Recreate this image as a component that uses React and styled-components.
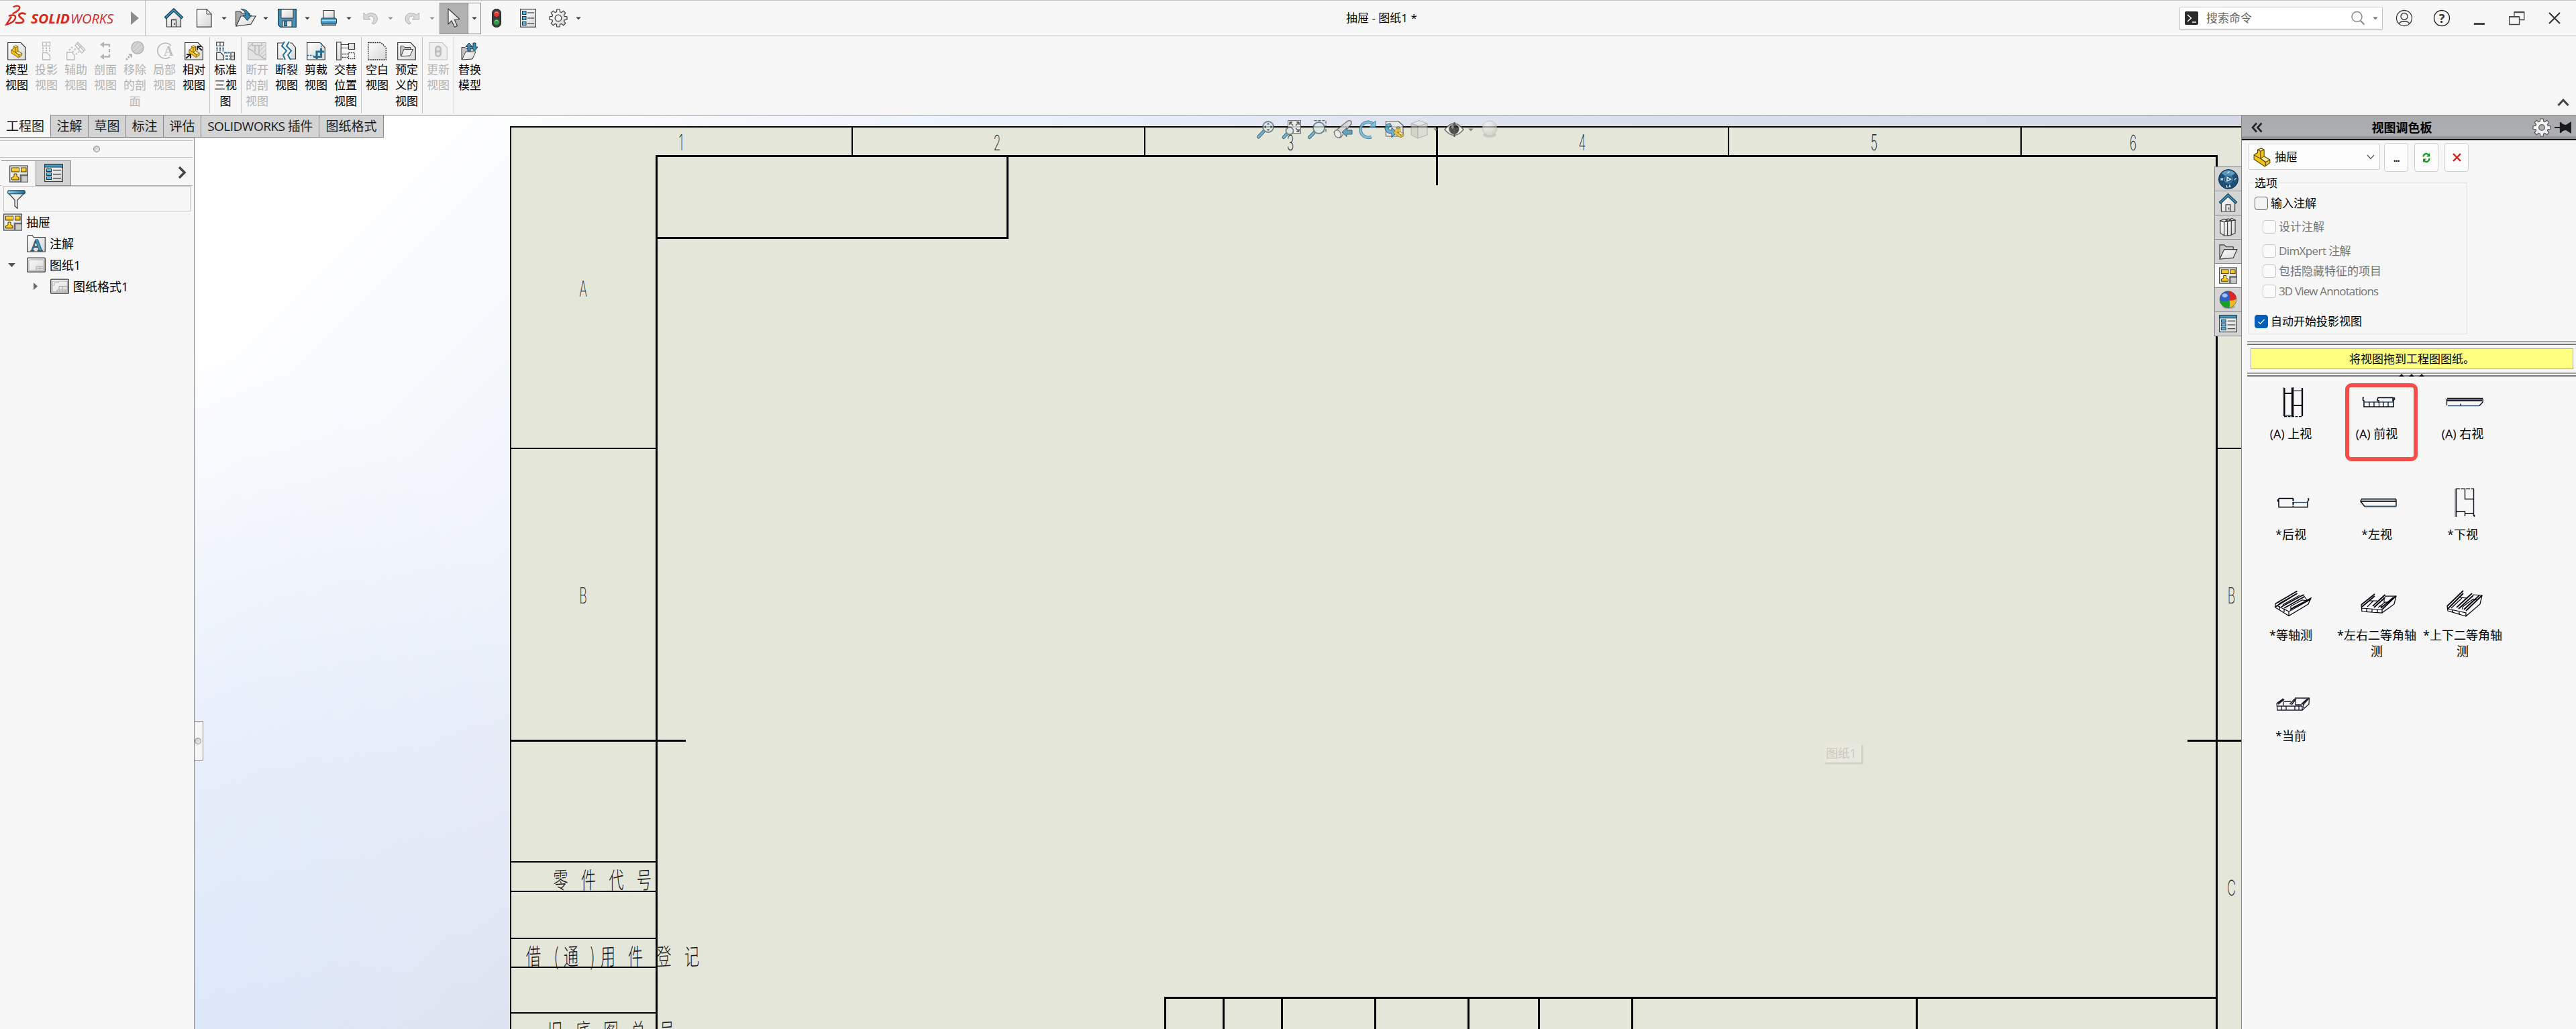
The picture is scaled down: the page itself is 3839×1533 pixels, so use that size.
import React from "react";
import styled, { createGlobalStyle, css } from "styled-components";

const UI = `"Open Sans", "Noto Sans", "Noto Sans CJK SC", sans-serif`;

const GlobalStyle = createGlobalStyle`
  *, *::before, *::after { box-sizing: border-box; }
  body { margin: 0; background: #f7f7f7; font-family: ${UI}; font-weight: 400; color: #000; }
`;

/* ---------- frame ---------- */
const Window = styled.div`
  width: 3839px;
  height: 1533px;
  overflow: hidden;
  display: flex;
  flex-direction: column;
  background: #f7f7f7;
`;
const TitleBar = styled.header`
  flex: none;
  height: 54px;
  display: flex;
  align-items: center;
  border-top: 1px solid #c0c0c0;
  border-bottom: 1px solid #c0c0c0;
`;
const Brand = styled.div`
  width: 217px;
  height: 52px;
  display: flex;
  align-items: center;
  border-right: 1px solid #c0c0c0;
`;
const QuickBar = styled.div`
  width: 1789px;
  display: flex;
  align-items: center;
`;
const Tool = styled.span`
  display: flex;
  flex: none;
  width: 28px;
  height: 28px;
  margin-left: ${(p) => p.$ml || 0}px;
  opacity: ${(p) => (p.$off ? 0.8 : 1)};
`;
const SelectTool = styled.div`
  display: flex;
  margin-left: 7px;
  width: 62px;
  height: 47px;
  border: 1px solid #8a8a8a;
`;
const SelectMain = styled.div`
  width: 42px;
  display: flex;
  align-items: center;
  justify-content: center;
  background: #b2b2b2;
  border-right: 1px solid #777;
`;
const SelectDrop = styled.div`
  flex: 1;
  display: flex;
  align-items: center;
  justify-content: center;
`;
const DocTitle = styled.div`
  font-size: 17px;
  line-height: 24px;
  white-space: pre;
`;
const WindowTools = styled.div`
  margin-left: auto;
  padding-right: 20px;
  display: flex;
  align-items: center;
`;
const SearchBox = styled.div`
  width: 303px;
  height: 35px;
  padding: 0 6px 0 7px;
  display: flex;
  align-items: center;
  background: #fff;
  border: 1px solid #c4c4c4;
  border-bottom-color: #9a9a9a;
  border-radius: 2px;
  color: #666;
  font-size: 17px;
`;
const SearchText = styled.span`
  flex: 1;
  margin-left: 12px;
  line-height: 24px;
`;
const SearchLens = styled.span`
  display: flex;
  margin-right: 12px;
`;
const SysButton = styled.span`
  display: flex;
  width: 24px;
  height: 28px;
  margin-left: ${(p) => p.$ml || 32}px;
`;

/* ---------- ribbon ---------- */
const Ribbon = styled.div`
  flex: none;
  height: 118px;
  padding: 1px 10px 0 3px;
  display: flex;
  border-bottom: 1px solid #888;
`;
const RibbonItem = styled.div`
  width: 44px;
  padding-top: 7px;
  display: flex;
  flex-direction: column;
  align-items: center;
  color: ${(p) => (p.$off ? "#b4b4b4" : "#000")};
`;
const RibbonLabel = styled.div`
  margin-top: 2px;
  font-size: 17px;
  line-height: 23.3px;
  text-align: center;
  white-space: pre;
`;
const RibbonSep = styled.div`
  width: 1px;
  height: 114px;
  margin: 0 1px;
  background: #c3c3c3;
`;
const RibbonFold = styled.div`
  margin: 90px 0 0 auto;
  display: flex;
  height: 14px;
`;

/* ---------- body ---------- */
const Body = styled.div`
  flex: 1;
  display: flex;
  min-height: 0;
`;
const LeftPanel = styled.aside`
  flex: none;
  width: 290px;
  display: flex;
  flex-direction: column;
  align-items: flex-start;
`;
const TabStrip = styled.nav`
  position: relative;
  z-index: 3;
  display: flex;
  width: max-content;
  height: 33px;
`;
const Tab = styled.div`
  width: ${(p) => p.$w}px;
  height: ${(p) => (p.$active ? 34 : 33)}px;
  margin-top: ${(p) => (p.$active ? -1 : 0)}px;
  padding-top: ${(p) => (p.$active ? 1 : 0)}px;
  display: flex;
  align-items: center;
  justify-content: center;
  background: ${(p) => (p.$active ? "#f7f7f7" : "#d4d4d4")};
  border-right: 1px solid #888;
  border-bottom: 1px solid #888;
  font-size: 19px;
  line-height: 26px;
  letter-spacing: ${(p) => p.$ls || 0}px;
  white-space: pre;
  color: #1a1a1a;
`;
const TreePane = styled.div`
  width: 290px;
  flex: 1;
  border-right: 1px solid #888;
  border-top: 1px solid #c9d3dc;
`;
const Grip = styled.div`
  width: 287px;
  height: 26px;
  margin-top: 3px;
  display: flex;
  align-items: center;
  justify-content: center;
  border-top: 1px solid #c3c3c3;
  border-bottom: 1px solid #c3c3c3;
`;
const GripDot = styled.span`
  width: 10px;
  height: 10px;
  border-radius: 50%;
  border: 1px solid #8c8c8c;
  background: linear-gradient(135deg, #c2c2c2, #f2f2f2);
`;
const PaneTabs = styled.div`
  width: 287px;
  height: 42px;
  padding: 4px 0 0 2px;
  display: flex;
  border-bottom: 1px solid #a8a8a8;
`;
const PaneTab = styled.div`
  width: ${(p) => (p.$on ? 51 : 53)}px;
  height: 38px;
  display: flex;
  align-items: center;
  justify-content: center;
  border-top: 1px solid #888;
  ${(p) =>
    p.$on
      ? css`background: #f7f7f7;`
      : css`
          background: #d4d4d4;
          border: 1px solid #888;
        `}
`;
const PaneMore = styled.div`
  margin: 8px 9px 0 auto;
`;
const FilterBox = styled.div`
  width: 279px;
  height: 38px;
  margin-left: 5px;
  padding: 5px 0 0 5px;
  border: 1px solid #c6c6c6;
`;
const TreeRow = styled.div`
  height: 32px;
  padding-left: ${(p) => p.$pad}px;
  display: flex;
  align-items: center;
  font-size: 18px;
  line-height: 26px;
  white-space: pre;
`;
const TreeToggle = styled.span`
  width: 12px;
  height: 12px;
  display: flex;
  margin-right: ${(p) => p.$mr}px;
`;
const TreeIcon = styled.span`
  width: 28px;
  height: 28px;
  display: flex;
  margin-right: 6px;
`;

/* ---------- viewport ---------- */
const Viewport = styled.main`
  position: relative;
  flex: 1;
  min-width: 0;
  overflow: hidden;
  background:
    radial-gradient(ellipse 620px 1000px at 0 100%, rgba(208, 224, 249, 0.5), rgba(215, 228, 250, 0) 100%),
    linear-gradient(135deg, #ffffff 7%, #f3f6fc 21%, #ecf1fa 28%, #e5e9f4 36%, #dfe3ee 42%, #d4d9e5 70%);
`;
const SheetSvg = styled.svg`
  display: block;
  width: 3050px;
  height: 1361px;
`;
const Hud = styled.div`
  position: absolute;
  left: 1583px;
  top: 7px;
  display: flex;
  gap: 10px;
  align-items: center;
  opacity: 0.8;
`;
const HudCaret = styled.span`
  display: flex;
  margin: 0 ${(p) => p.$mr}px 0 -3px;
`;
const SplitHandle = styled.div`
  position: absolute;
  left: -1px;
  top: 902px;
  width: 14px;
  height: 59px;
  padding-left: 1px;
  display: flex;
  align-items: center;
  background: #f7f7f7;
  border: 1px solid #888;
  border-left: 0;
`;
const SheetTip = styled.div`
  position: absolute;
  left: 2428px;
  top: 936px;
  width: 56px;
  height: 28px;
  padding-left: 3px;
  font-size: 18px;
  line-height: 28px;
  letter-spacing: -0.3px;
  white-space: nowrap;
  color: #c9c9c0;
  background: #e8e8df;
  box-shadow: 2px 2px 2px rgba(0, 0, 0, 0.13);
`;
const TaskTabs = styled.div`
  position: absolute;
  right: 0;
  top: 76px;
  width: 40px;
  display: flex;
  flex-direction: column;
  border-top: 1px solid #888;
`;
const TaskTab = styled.div`
  height: 36px;
  display: flex;
  align-items: center;
  justify-content: center;
  background: ${(p) => (p.$on ? "#f7f7f7" : "#d4d4d4")};
  border-left: 1px solid #888;
  border-bottom: 1px solid #888;
`;

/* ---------- view palette ---------- */
const Palette = styled.aside`
  flex: none;
  width: 499px;
  border-left: 1px solid #888;
  background: #f7f7f7;
`;
const PaletteHead = styled.div`
  height: 37px;
  padding: 0 6px 0 14px;
  display: flex;
  align-items: center;
  background: linear-gradient(#a9aaad, #aeafb2 85%, #8f9093 93%);
  border-bottom: 2px solid #111;
`;
const PaletteTitle = styled.div`
  width: 396px;
  margin-left: 12px;
  text-align: center;
  font-size: 18px;
  font-weight: 700;
  line-height: 26px;
`;
const PinSlot = styled.span`
  display: flex;
  margin-left: 5px;
`;
const SourceRow = styled.div`
  display: flex;
  padding: 4px 0 0 10px;
  height: 47px;
`;
const Combo = styled.div`
  width: 196px;
  height: 39px;
  margin: 1px 6px 0 0;
  padding: 0 7px 0 5px;
  display: flex;
  align-items: center;
  background: #fdfdfd;
  border: 1px solid #ccc;
  border-radius: 2px;
  font-size: 17px;
  line-height: 24px;
`;
const ComboText = styled.span`
  flex: 1;
  margin-left: 5px;
`;
const SquareButton = styled.div`
  width: 36px;
  height: 43px;
  margin-right: 9px;
  display: flex;
  align-items: center;
  justify-content: center;
  background: #fdfdfd;
  border: 1px solid #cfcfcf;
  border-radius: 4px;
  font-size: 16px;
  font-weight: 600;
  letter-spacing: -1.4px;
`;
const Options = styled.section`
  width: 326px;
  height: 226px;
  margin: 16px 0 0 10px;
  border: 1px solid #dcdcdc;
`;
const Legend = styled.div`
  width: max-content;
  margin: -12px 0 0 6px;
  padding: 0 2px;
  background: #f7f7f7;
  font-size: 17px;
  line-height: 24px;
`;
const CheckRow = styled.label`
  height: 20px;
  margin-top: ${(p) => p.$mt}px;
  margin-left: ${(p) => (p.$sub ? 20 : 8)}px;
  display: flex;
  align-items: center;
  gap: 4px;
  font-size: 17px;
  line-height: 24px;
  letter-spacing: ${(p) => p.$ls || 0}px;
  white-space: pre;
  color: ${(p) => (p.$sub ? "#747474" : "#000")};
`;
const Box = styled.span`
  width: 20px;
  height: 20px;
  display: flex;
  border-radius: 4px;
  border: 1px solid ${(p) => (p.$on ? "#005fb8" : p.$sub ? "#c6c6c6" : "#666")};
  background: ${(p) => (p.$on ? "#005fb8" : p.$sub ? "#fbfbfb" : "#f3f3f3")};
`;
const Splitter = styled.div`
  height: 6px;
  margin: ${(p) => p.$mt}px 0 0 8px;
  display: flex;
  justify-content: center;
  border-top: 2px solid #a0a0a0;
  border-bottom: 2px solid #777;
`;
const Hint = styled.div`
  height: 31px;
  margin: 5px 4px 0 13px;
  border: 1px solid #a9a9a0;
  background: #ffff80;
  text-align: center;
  font-size: 17px;
  line-height: 29px;
`;
const Views = styled.div`
  display: grid;
  grid-template-columns: repeat(3, 128px);
  grid-auto-rows: 150px;
  margin: 8px 0 0 9px;
`;
const ViewItem = styled.div`
  position: relative;
  padding-top: 6px;
  display: flex;
  flex-direction: column;
  align-items: center;
`;
const ThumbSvg = styled.svg`
  display: block;
  width: 56px;
  height: 48px;
  margin-left: 5px;
`;
const ViewLabel = styled.div`
  margin-top: 12px;
  width: 128px;
  text-align: center;
  font-size: 18px;
  line-height: 23.5px;
`;
const Highlight = styled.span`
  position: absolute;
  left: 17px;
  top: 2px;
  width: 108px;
  height: 116px;
  border: 6px solid #f84c47;
  border-radius: 9px;
`;
const Glyph = styled.svg`
  display: block;
  flex: none;
  overflow: visible;
`;

/* ---------- icons ---------- */
const K = "#3a3a3a";
const B = "#1f6f98";

const Part = ({ t }) => (
  <g transform={t} stroke="#5e4300" strokeWidth="1" strokeLinejoin="round">
    <path d="M1 9 L6 6 L6 2 L11 0 L15 2 L15 11 L23 16 L23 20 L16 25 L1 15Z" fill="#f3c21c" />
    <path d="M6 2 L11 0 L15 2 L10 4Z M15 11 L23 16 L17 19 L10 14Z" fill="#fff0a0" />
    <path d="M10 4 V14 L17 19 V24 M1 9 L6 12 L10 14" fill="none" />
  </g>
);
const DrawingIcon = () => (
  <>
    <rect x=".7" y="2" width="26.6" height="24" fill="url(#gPaper)" stroke={K} strokeWidth="1.2" />
    <g fill="url(#gYellow)" stroke="#4a3600" strokeWidth="1">
      <rect x="3.5" y="5" width="11" height="6" />
      <rect x="17.5" y="5" width="7.5" height="6" />
      <path d="M7 14 H11 V18 L14 19.5 V23 H3.5 V19.5 L7 18Z" />
    </g>
    <rect x="17" y="15.5" width="10" height="10" fill="#ccc" />
    <path d="M17 26 V16 H27" stroke="#6a6a6a" strokeWidth="2.5" fill="none" />
  </>
);
const ListIcon = () => (
  <>
    <rect x=".7" y="1" width="26.6" height="25.5" fill="url(#gPaper)" stroke={K} strokeWidth="1.2" />
    <rect x=".7" y="1" width="26.6" height="4" fill="#4a9cc2" stroke="#12384d" />
    {[7.5, 13.5, 19.5].map((y) => (
      <g key={y}>
        <rect x="3.5" y={y} width="7" height="4" fill="#5cb4dc" stroke="#12384d" />
        <path d={`M13 ${y + 2} H25`} stroke={K} strokeWidth="1.2" />
      </g>
    ))}
  </>
);
const Mag = ({ cx = 17, cy = 10, r = 8, tail = "M10 17 L2.5 25" }) => (
  <>
    <path d={tail} stroke="#1d4f6b" strokeWidth="5" strokeLinecap="round" />
    <path d={tail} stroke="#5aa7cb" strokeWidth="3" strokeLinecap="round" />
    <circle cx={cx} cy={cy} r={r} fill="rgba(222,236,240,.85)" stroke="#5b6b73" strokeWidth="1.8" />
  </>
);
const Home = () => (
  <>
    <path d="M3.5 14 V27 H24.5 V14 L14 4Z" fill="url(#gPaper)" stroke={K} strokeWidth="1.2" />
    <path d="M1 14 L14 1.5 L27 14" fill="none" stroke="#123f57" strokeWidth="4" />
    <path d="M1.8 13.4 L14 1.9 L26.2 13.4" fill="none" stroke="#3e93bb" strokeWidth="2" />
    <path d="M10.5 27 V16.5 H17.5 V27 M15.2 21 v3" fill="none" stroke={K} strokeWidth="1.3" />
  </>
);
const Folder = () => (
  <>
    <path d="M1 25 V4 H8 L11 7 H22 V11" fill="#c9c9c9" stroke={K} strokeWidth="1.2" />
    <path d="M1 26 L8 11 H28 L22 24Z" fill="url(#gPaper)" stroke={K} strokeWidth="1.2" strokeLinejoin="round" />
  </>
);
const gearPath = (() => {
  const pts = [];
  for (let i = 0; i < 8; i++) {
    const a = (i * Math.PI) / 4;
    [[-0.27, 9.6], [-0.17, 13.2], [0.17, 13.2], [0.27, 9.6]].forEach(([d, r]) =>
      pts.push(`${(14 + r * Math.sin(a + d)).toFixed(2)} ${(14 - r * Math.cos(a + d)).toFixed(2)}`)
    );
  }
  return `M${pts.join(" L")}Z`;
})();
const curl = "M4 6 V16 H14 L10.5 12.5 C15 9 20 12 19 17 C18.6 19 17.5 20.5 16 21.5 L19.5 23 C27 18 25.5 8 17 6.5 C13 6 10 7.5 7.5 9.5Z";

const ICONS = {
  home: <Home />,
  file: (
    <>
      <path d="M3.5 .8 H18 L25 8 V27.2 H3.5Z" fill="url(#gPaper)" stroke={K} strokeWidth="1.2" />
      <path d="M18 .8 V8 H25Z" fill="#fff" stroke={K} strokeWidth="1" />
    </>
  ),
  open: (
    <>
      <path d="M-.5 25 V4 H6 L9 7 H20 V11" fill="#a8a8a8" stroke={K} strokeWidth="1.2" />
      <path d="M0 26 L7 11 H29 L22 23Z" fill="url(#gPaper)" stroke={K} strokeWidth="1.2" />
      <path d="M7 .5 C14 .5 19 4 19 10 H23 L16.5 17.5 L10 10 H14 C14 6 12 2.5 7 .5Z" fill="#3d88b0" stroke="#123f57" />
    </>
  ),
  save: (
    <>
      <path d="M.7 .7 H27.3 V27.3 H4 L.7 24Z" fill="#4a93b8" stroke="#123f57" strokeWidth="1.3" />
      <path d="M5 1 H23 V14 H5Z" fill="url(#gPaper)" stroke={K} />
      <path d="M7 27 V18 H21 V27Z" fill="#e9e9e9" stroke={K} />
      <rect x="9.5" y="19.5" width="4" height="6" fill="#4a93b8" stroke="#123f57" />
    </>
  ),
  print: (
    <>
      <path d="M6 14 V2.5 H22 V14" fill="url(#gPaper)" stroke={K} strokeWidth="1.2" />
      <rect x="2.5" y="14" width="23" height="9" rx="2" fill="#3f93bd" stroke="#123f57" />
      <path d="M3.5 17.5 H25" stroke="#a8dcf2" strokeWidth="2" />
      <path d="M4 23 H24 V25.5 H4Z" fill="#ddd" stroke={K} />
    </>
  ),
  undo: <path d={curl} fill="#d4d4d4" stroke="#9a9a9a" strokeWidth="1" />,
  redo: <path transform="matrix(-1 0 0 1 28.5 0)" d={curl} fill="#d4d4d4" stroke="#9a9a9a" strokeWidth="1" />,
  cursor: <path d="M5 0 V23 L10 18 L14.5 27.5 L18.5 25.5 L14.3 16.5 L22 15.5Z" fill="url(#gPaper)" stroke={K} strokeWidth="1.2" strokeLinejoin="round" />,
  light: (
    <>
      <rect x="7.5" y=".5" width="13" height="27" rx="6" fill="#3a3a3a" stroke="#222" />
      <circle cx="14" cy="7.8" r="4.3" fill="#d8382c" />
      <circle cx="14" cy="20" r="4.3" fill="#2e9a40" />
      <path d="M11.5 6.5 q2.5 -3 5 0" stroke="#f7a79f" fill="none" />
      <path d="M11.5 18.7 q2.5 -3 5 0" stroke="#a6e0ae" fill="none" />
    </>
  ),
  options: (
    <>
      <rect x="2.7" y=".7" width="22.6" height="26.6" fill="url(#gPaper)" stroke={K} strokeWidth="1.2" />
      {[3.5, 11.5, 19.5].map((y) => (
        <g key={y}>
          <rect x="5.5" y={y} width="5.5" height="5" fill="#5cb4dc" stroke="#12384d" />
          <path d={`M13 ${y + 2.5} H23`} stroke={K} strokeWidth="1.2" />
        </g>
      ))}
    </>
  ),
  gear: (
    <>
      <path d={gearPath} fill="url(#gPaper)" stroke={K} strokeWidth="1.2" strokeLinejoin="round" />
      <circle cx="14" cy="14" r="4.8" fill="#f7f7f7" stroke={K} strokeWidth="1.2" />
    </>
  ),
  gearHead: (
    <>
      <path d={gearPath} fill="#f4f4f4" stroke="#555" strokeWidth="1.2" strokeLinejoin="round" />
      <circle cx="14" cy="14" r="4.3" fill="#b0b1b4" stroke="#666" strokeWidth="1.5" />
    </>
  ),
  model: (
    <>
      <path d="M.7 1.5 H20 L27.3 9 V27 H.7Z" fill="url(#gPaper)" stroke={K} strokeWidth="1.2" />
      <Part t="translate(5 6) scale(.72)" />
    </>
  ),
  relative: (
    <>
      <path d="M.7 1.5 H20 L27.3 9 V27 H.7Z" fill="url(#gPaper)" stroke={K} strokeWidth="1.2" />
      <Part t="translate(6 6) scale(.7)" />
      <path d="M26 13 L19 7 M19 7 h6 M19 7 v6 M2 25 L9 19 M9 19 h-6 M9 19 v6" stroke="#222" strokeWidth="2" />
    </>
  ),
  projected: (
    <g fill="none" stroke="#bcbcbc" strokeWidth="1.3">
      <path d="M8.5 .8 H19.5 V6.5 H8.5Z M14 1 V6 M8.5 27 V16.5 H15 L19.5 21 V27Z" />
      <path d="M9 8.5 v6 M14 8.5 v6 M19 8.5 v6" strokeDasharray="2.5 1.5" strokeWidth="2" />
    </g>
  ),
  auxiliary: (
    <g fill="none" stroke="#bcbcbc" strokeWidth="1.3">
      <path d="M.7 27 V16 H8 L12 20 V27Z M13 6 L17 1 L28 12 L23 17Z M16 3 L26 14 M18 11 L22 6" />
      <path d="M4 13 L10 7 M9 16 L14 10 M14 19 L19 15" strokeDasharray="2.5 2" strokeWidth="2" />
    </g>
  ),
  section: (
    <>
      <path d="M8 4.5 H20 V8 M20 11 V16 M20 19 V22.5 H8" fill="none" stroke="#b5b5b5" strokeWidth="2.3" />
      <path d="M6 4.5 L12 0 V9Z M6 22.5 L12 18 V27Z" fill="#b5b5b5" />
    </>
  ),
  removed: (
    <>
      <circle cx="18" cy="9" r="9" fill="#d4d4d4" stroke="#b4b4b4" strokeWidth="1.5" />
      <path d="M11 10 L19 1 M12 15 L25 3 M17 17.5 L26.5 9" stroke="#b4b4b4" />
      <path d="M1 27 L7 21" stroke="#b4b4b4" strokeWidth="3" strokeDasharray="2.5 1.5" />
      <path d="M10 18 V25 L4 18Z" fill="#b4b4b4" />
    </>
  ),
  detail: (
    <>
      <path d="M24 6 A11.5 11.5 0 1 0 22 23" fill="none" stroke="#bcbcbc" strokeWidth="1.6" />
      <text x="13" y="21" fontFamily="Liberation Serif, serif" fontWeight="700" fontSize="20" fill="#c0c0c0">A</text>
    </>
  ),
  standard3: (
    <>
      <g fill="url(#gPaper)" stroke={K} strokeWidth="1.2">
        <path d="M.7 .8 H11.5 V6.5 H.7Z M6 1 V6 M.7 27 V16.5 H7 L11.5 21 V27Z M22 16 H27.5 V27 H22Z M22 21.5 H27" />
      </g>
      <path d="M1.5 8.5 v6 M6 8.5 v6 M10.5 8.5 v6" strokeDasharray="3.5 1" strokeWidth="2" stroke={B} />
      <path d="M12 16.5 h8.5 M14 21.5 h6.5 M14 26 h6.5" strokeDasharray="4 1" strokeWidth="2" stroke={B} />
    </>
  ),
  broken: (
    <g stroke="#b8b8b8" fill="none">
      <path d="M.7 1.5 H27.3 V27 H.7Z" fill="#e2e2e2" />
      <path d="M.7 10 L8 14 L13 19 L18 20 L22 24 L27 26 M7 2 V6 H21 V2 M11 6 V15 M17 6 V18" strokeWidth="1.5" />
      <path d="M1 9 L8 2 M20 19 L27 12 M17 15 L27 5 M22 23 L27 18" />
    </g>
  ),
  breakView: (
    <>
      <path d="M9 2 H.7 V26 H9 M19 2 H22 L27.5 9 V26 H20" fill="url(#gPaper)" stroke={K} strokeWidth="1.2" />
      <path d="M11 0 L7 6.5 L14 13.5 L9 20 L12 27 M18 0 L14 6.5 L21 13.5 L16 20 L20 27" fill="none" stroke={B} strokeWidth="2" />
    </>
  ),
  crop: (
    <>
      <path d="M.7 1.5 H20 L27.3 9 V27 H.7Z" fill="url(#gPaper)" stroke={K} strokeWidth="1.2" />
      <path d="M1 20.5 H10 M22 2 V10" stroke={B} strokeDasharray="2.5 1.5" strokeWidth="1.3" />
      <path d="M10 22.5 H21.5 V10 M15 26 V15 H26" stroke={B} strokeWidth="3.2" fill="none" />
    </>
  ),
  alternate: (
    <>
      <rect x=".7" y=".8" width="6.5" height="26.4" fill="url(#gPaper)" stroke={K} strokeWidth="1.2" />
      <path d="M7 4.5 H18 M7 9.5 H18 M18.5 2.5 H27.5 V11.5 H18.5Z" fill="url(#gPaper)" stroke={K} strokeWidth="1.2" />
      <path d="M9 18.5 H18 M9 23.5 H18 M18.5 16.5 H27.5 V25.5 H18.5Z" fill="none" stroke={K} strokeWidth="1.3" strokeDasharray="2 1.3" />
    </>
  ),
  empty: <path d="M.7 1.5 H20 L27.3 9 V27 H.7Z" fill="url(#gPaper)" stroke="#222" strokeWidth="1.3" strokeDasharray="2 1.3" />,
  predefined: (
    <>
      <path d="M.7 1.5 H20 L27.3 9 V27 H.7Z" fill="url(#gPaper)" stroke={K} strokeWidth="1.2" />
      <path d="M5 21 V6.5 H9 L11 8.5 H20 V11" fill="#c4c4c4" stroke={K} />
      <path d="M5.5 22 L10 11.5 H23.5 L19 21Z" fill="#f2f2f2" stroke={K} />
    </>
  ),
  update: (
    <>
      <path d="M.7 1.5 H20 L27.3 9 V27 H.7Z" fill="#efefef" stroke="#c6c6c6" strokeWidth="1.2" />
      <rect x="9" y="6" width="10" height="17" rx="5" fill="#bdbdbd" />
      <circle cx="14" cy="11" r="2.6" fill="#e4e4e4" />
      <circle cx="14" cy="18" r="2.6" fill="#e4e4e4" />
    </>
  ),
  replace: (
    <>
      <path d="M2 27 V8.5 H7 L9 10.5 H20 V14" fill="#c4c4c4" stroke={K} />
      <path d="M2.5 27 L8 15 H23 L18 26Z" fill="url(#gPaper)" stroke={K} />
      <path d="M13 2 L18 7.5 H15 V14 H11 V7.5 H8Z M19 2 V8 H16.5 L21.5 14 L26 8 H23 V2Z" fill="#3f8fb6" stroke="#123f57" />
    </>
  ),
  drawing: <DrawingIcon />,
  list: <ListIcon />,
  funnel: (
    <>
      <path d="M1 4 L11 15 V24 L15 27.5 V15 L26 4Z" fill="url(#gPaper)" stroke={K} strokeWidth="1.2" />
      <rect x=".7" y=".8" width="25.5" height="5" rx="1" fill="url(#gBlue)" stroke="#123f57" />
    </>
  ),
  noteFolder: (
    <>
      <path d="M.7 26 V2.5 L3 1.5 H8 L10 4.5 H27.3 V26Z" fill="url(#gPaper)" stroke={K} strokeWidth="1.2" />
      <text x="14.5" y="25" textAnchor="middle" fontFamily="Liberation Serif, serif" fontWeight="700" fontSize="25" fill="#4a9cc2" stroke="#123f57" strokeWidth=".8">A</text>
    </>
  ),
  sheet: (
    <>
      <rect x=".7" y="3.2" width="26.6" height="21" rx="1" fill="url(#gPaper)" stroke={K} strokeWidth="1.3" />
      <path d="M3 6 H25.5 V22 H3Z M14 22 V16 H25 M14 19 H25 M19 16 V22" fill="none" stroke="#a8a8a8" />
    </>
  ),
  sheetFormat: (
    <>
      <rect x=".7" y="3.2" width="26.6" height="21" rx="1" fill="url(#gPaper)" stroke={K} strokeWidth="1.3" />
      <path d="M3 6 H25.5 V22 H3Z M3 12 H6 V8 H12 V6 M13 19 V13.5 H25 M10 22 V19 H25 M18 14 V22 M22 19 V22 M14 19 V22" fill="none" stroke="#a8a8a8" />
    </>
  ),
  zoomFit: (
    <>
      <Mag />
      <path d="M17 4 l2.5 2.5 h-5Z M17 16 l2.5 -2.5 h-5Z M11 10 l2.5 -2.5 v5Z M23 10 l-2.5 -2.5 v5Z" fill="#333" />
    </>
  ),
  zoomSheet: (
    <>
      <rect x="8.5" y=".7" width="19" height="19" fill="#eee" stroke={K} />
      <path d="M11 3 l5 5 M11 3 h4 M11 3 v4 M25 3 l-5 5 M25 3 h-4 M25 3 v4 M25 17 l-5 -5 M25 17 h-4 M25 17 v-4" stroke="#333" strokeWidth="1.5" />
      <Mag cx={11} cy={16} r={5.5} tail="M6.5 21 L2 25.5" />
    </>
  ),
  zoomArea: (
    <>
      <path d="M9.5 .7 H27 V17 H20" fill="none" stroke={K} strokeWidth="1.2" strokeDasharray="4 2" />
      <Mag cx={16.5} cy={11.5} r={8.5} tail="M9 19 L2.5 25.5" />
    </>
  ),
  prevView: (
    <>
      <path d="M1 18 L19 3 Q24 -1 27 2 Q28 5 25 8 L11 26 Q5 28 1 18Z" fill="#d6d6d6" stroke="#555" strokeWidth="1.2" />
      <ellipse cx="6.5" cy="20.5" rx="4.5" ry="6" transform="rotate(-30 6.5 20.5)" fill="#eee" stroke="#555" strokeWidth="1.2" />
      <path d="M13 18 L20 11.5 V15 H28 V21 H20 V24.5Z" fill="#4a93b8" stroke="#123f57" />
    </>
  ),
  rotate: (
    <>
      <path d="M19 25 C10 28 2.5 22 2.5 14 C3 5 13 -.5 21 5" fill="none" stroke="#2d6a8a" strokeWidth="4.5" />
      <path d="M19 25 C10 28 2.5 22 2.5 14 C3 5 13 -.5 21 5" fill="none" stroke="#6bb8dc" strokeWidth="2.5" />
      <path d="M25 1 V11 H15Z" fill="#6bb8dc" stroke="#2d6a8a" />
    </>
  ),
  view3d: (
    <>
      <path d="M2.5 1.5 H21 L28 8 V24 H2.5Z" fill="#e9e9e9" stroke={K} strokeWidth="1.2" />
      <path d="M9 5 C-2 5 -2 20 11 20 V26 L19 18 L11 11 V15 C5 15 5 10 11 9Z" fill="#4aa3cc" stroke="#123f57" />
      <Part t="translate(14 10) scale(.65)" />
    </>
  ),
  cube: (
    <g stroke="#8c8c84" strokeWidth="1" opacity=".7">
      <path d="M2 5 L14 .5 L26 5 L14 9Z" fill="#e8e8e8" />
      <path d="M2 5 V22 L12 27 V9Z" fill="#c8c8c2" />
      <path d="M26 5 V22 L12 27 V9Z" fill="#d8d8d0" />
    </g>
  ),
  eye: (
    <>
      <path d="M0 14 Q14 -4 28 14 Q14 31 0 14Z" fill="#eee" stroke="#555" strokeWidth="1.5" />
      <circle cx="14" cy="13.5" r="7.5" fill="#2c2c2c" />
      <circle cx="12" cy="10" r="2.5" fill="#999" />
      <path d="M14.5 3 V25" stroke="#333" strokeWidth="2" />
    </>
  ),
  sphere: (
    <g opacity=".75">
      <ellipse cx="14" cy="22" rx="10" ry="4" fill="#bcbcb2" />
      <circle cx="14" cy="12" r="11" fill="url(#gBall)" stroke="#b4b4aa" />
    </g>
  ),
  wheel: (
    <>
      <circle cx="14" cy="14" r="14.5" fill="#1d4f74" stroke="#0e2f47" />
      <path d="M4 5 Q14 -4 24 5 L19 9 Q14 5 9 9Z" fill="#5d9cc2" />
      <circle cx="14" cy="14" r="6" fill="#245f8a" stroke="#7fb4d4" strokeWidth=".8" />
      <path d="M12 11 L17.5 14 L12 17Z" fill="none" stroke="#fff" strokeWidth="1.3" />
      <path d="M2.5 12.5 l3.5 3 M2.5 15.5 l3.5 -3 M23.5 15.5 q0 -3 2.5 -3 M11.5 23 v3 h2 M15 26 l1 -3 l1 3 M12.5 5 l3 -2.5" stroke="#d6ebf7" strokeWidth="1.2" fill="none" />
    </>
  ),
  library: (
    <g stroke={K} strokeWidth="1.2" fill="url(#gPaper)">
      <path d="M2 4 L8 6 V27 L2 23Z M8 6 L13 5 V27 L8 27Z M13 5 L19 4 V26 L13 27Z M19 4 L25 3 V23 L19 26Z" />
      <path d="M2 4 L8 1.5 L13 3 L8 6Z M10 2.5 L14 .8 L18 2.5 L13 5Z M16 2 L20 .3 L25 3 L19 4Z" />
    </g>
  ),
  folder: <Folder />,
  beach: (
    <>
      <ellipse cx="15" cy="25" rx="10" ry="3" fill="#8a8a8a" opacity=".6" />
      <circle cx="14" cy="13.5" r="12.8" fill="#2a5fd0" stroke="#444" strokeWidth=".8" />
      <path d="M14 .7 A12.8 12.8 0 0 1 26.8 13 Q20 16 16 15 Q17 7 14 .7Z" fill="#dc2626" />
      <path d="M26.8 13 A12.8 12.8 0 0 1 16 26 Q17 20 16 15 Q21 16 26.8 13Z" fill="#f2b91d" />
      <path d="M16 26 A12.8 12.8 0 0 1 1.3 15 Q8 18 16 15 Q17 21 16 26Z" fill="#19a01f" />
      <ellipse cx="9" cy="7.5" rx="4" ry="3" fill="#cfe0ff" opacity=".75" />
    </>
  ),
  part: <Part t="translate(1 1) scale(1.08)" />,
};

const Icon = ({ name, w = 28 }) => (
  <Glyph width={w} height={w} viewBox="0 0 28 28" fill="none">
    {ICONS[name]}
  </Glyph>
);
const Caret = ({ c = "#444" }) => (
  <Glyph width="8" height="5" viewBox="0 0 8 5"><path d="M.3 .5 H7.7 L4 4.5Z" fill={c} /></Glyph>
);
const CaretSlot = styled.span`
  display: flex;
  flex: none;
  margin-left: 12px;
`;

/* ---------- thumbnails ---------- */
const N = "#2d5575";
const cells = (xs, y0, y1) => xs.map((x) => `M${x} ${y0} V${y1}`).join(" ");
const THUMBS = {
  top: (
    <>
      <path d="M-14 -22 V21" stroke="#999" strokeWidth="2" />
      <path d="M-12.5 -21 V21 M-12 -13 H-1 M1 5 H14" strokeWidth="2" />
      <path d="M-1 -21 V21 M14 -21 V21" strokeWidth="2.3" />
      <path d="M1 -17 H14 M1 -22 V21 M-1 -22 V-17" strokeWidth="1.2" />
      <path d="M-11 20 H-2" stroke={N} strokeWidth="1.5" />
      <path d="M-13 21.5 H14" strokeDasharray="4 1.5" />
    </>
  ),
  front: (
    <>
      <path d="M-22 -6.5 H-23.5 V-3 L-22 -2 V7 H22 V-3 L23.5 -4 V-6 H21.5 M-2 -3 L-1 -6.5 H21 V-1 M-2 -1 V-4 M0 -3 V1" strokeWidth="1.5" />
      <path d="M-22 0 H-1 M1 0 H22" stroke={N} strokeWidth="1.6" />
      <path d={cells([-14, -7, 0.5, 7, 14], 0, 7)} />
    </>
  ),
  right: (
    <>
      <path d="M-26 -5.5 H27" strokeWidth="1.5" />
      <path d="M-26 -2.5 H26" stroke="#101830" strokeWidth="2.5" />
      <path d="M-26.5 -5 V5 M27 -5 V0 L22 5.5" strokeWidth="1.3" />
      <path d="M-25 5.5 H22" stroke={N} strokeWidth="1.6" />
      <path d="M-6 2.5 V5" />
    </>
  ),
  back: (
    <>
      <path d="M-21 -6.5 H.5 M-22.5 -5 V-2.5 L-21 -1 M-21 -6.5 V6.5 H22 V-2 L23.5 -4 V-6 H22" strokeWidth="1.5" />
      <path d="M.5 -6.5 V6.5" strokeWidth="2" strokeDasharray="4 1.5" />
      <path d="M1 -.5 H21" stroke={N} strokeWidth="1.3" />
    </>
  ),
  left: (
    <>
      <path d="M-26 -5.5 H26" stroke="#1c3645" strokeWidth="2" />
      <path d="M-26 -2.2 H26" stroke="#101018" strokeWidth="2" />
      <path d="M-26 -5 L-27 -2 L-21 5.5 M26 -5 V5.5" strokeWidth="1.4" />
      <path d="M-21 5.5 H26" stroke={N} strokeWidth="1.8" />
    </>
  ),
  bottom: (
    <>
      <path d="M-14 -21 V21" stroke="#888" strokeWidth="1.5" />
      <path d="M-12.5 -21 V21 M13.5 -21 V20 M.5 -21 V-5.5 H13" strokeWidth="1.4" stroke="#141428" />
      <path d="M-13 -21 H14" strokeDasharray="6 1.5" />
      <path d="M-12.5 13 H.5 V20 M1 16 H13 M14.5 18 V21" strokeWidth="1.4" />
    </>
  ),
  iso: (
    <>
      <path d="M-26 .5 L6.5 -18.5 M-26 5 L6.5 -15 M-17 5 L16 -13 M-13 7 L17 -10 M-4 9 L27 -7" strokeWidth="1.8" />
      <path d="M-26 .5 V6 L-6 18.5 L23 1 L27 -8 L21 -5 L16 -12 M-6 18.5 V12 L25 -5 M-24 3 L-6 12 M-20 9 V4 M-13 13 V8 M-21 .5 L3 -13 M-15 2 L10 -12 M-3 4 L14 -5 L22 -4 M-3 4 V8 M0 6 L18 -3" />
    </>
  ),
  dimetric: (
    <>
      <path d="M-26 2 L-6 -14 M-25 5 L-6 -11 M-9 4 L9.5 -13 M-7 6 L9.5 -9 M5 9 L25.5 -11 M3 7 L22 -9" strokeWidth="1.8" />
      <path d="M-26 2 L-25 12 L5 14 L23 1 L26 -11 H9 M-25 7 L5 9.5 V14 M-18 8 V12 M-10 8 V13 M-2 9 V13 M-14 -4 L-2 -4 M-17 5 L-8 -4 M-1 6 L10 -2 H14 M8 -9 V0 M0 4 H6" />
    </>
  ),
  trimetric: (
    <>
      <path d="M-26 4 L-2 -19 M-25 8 L-2 -15 M-12 6 L11 -15 M-9 8 L13 -12 M2 11 L26 -12 M-1 9 L22 -12" strokeWidth="1.8" />
      <path d="M-26 4 L-25 11 L2 19 L23 1 L26 -12 L12 -13 M-25 8 L2 14 V19 M-18 9 V13 M-8 11 V16 M-7 -9 L3 -8 M-20 7 L-4 -8 M-3 5 L12 -6 M1 7 L15 -6 M-3 5 V9 M12 -6 H18" />
    </>
  ),
  current: (
    <g stroke="#1a1a30">
      <path d="M-24 -1 L-14 -8 M-22 0 L-13 -7 M-4.5 0 L3 -8 M-2 1 L5 -8 M15 1 L24.5 -9 M13 0 L22 -8" strokeWidth="1.7" />
      <path d="M-24 -1 L-23 9 H14 L24 0 L24.5 -9 H3 M-23 3 H14 V9 M-17 3 V9 M-10 3 V9 M3 3 V9 M9 3 V9 M-13 -4 H-3 M-14 2 V-4 M4 -6 V1 H13 M16 6 V0" strokeWidth="1.3" />
    </g>
  ),
};
const Thumb = ({ name }) => (
  <ThumbSvg viewBox="-28 -24 56 48" fill="none" stroke="#05050f" strokeWidth="1.25">{THUMBS[name]}</ThumbSvg>
);

/* ---------- data ---------- */
const RIBBON = [
  [
    ["model", "模型\n视图"],
    ["projected", "投影\n视图", 1],
    ["auxiliary", "辅助\n视图", 1],
    ["section", "剖面\n视图", 1],
    ["removed", "移除\n的剖\n面", 1],
    ["detail", "局部\n视图", 1],
    ["relative", "相对\n视图"],
  ],
  [["standard3", "标准\n三视\n图"]],
  [
    ["broken", "断开\n的剖\n视图", 1],
    ["breakView", "断裂\n视图"],
    ["crop", "剪裁\n视图"],
    ["alternate", "交替\n位置\n视图"],
  ],
  [["empty", "空白\n视图"], ["predefined", "预定\n义的\n视图"]],
  [["update", "更新\n视图", 1]],
  [["replace", "替换\n模型"]],
];
const TABS = [
  ["工程图", 76],
  ["注解", 56],
  ["草图", 56],
  ["标注", 56],
  ["评估", 56],
  ["SOLIDWORKS 插件", 176, -0.5],
  ["图纸格式", 96],
];
const QUICK = [["file"], ["open"], ["save"], ["print"], ["undo", 1], ["redo", 1]];
const VIEWS = [
  ["top", "(A) 上视"],
  ["front", "(A) 前视", true],
  ["right", "(A) 右视"],
  ["back", "*后视"],
  ["left", "*左视"],
  ["bottom", "*下视"],
  ["iso", "*等轴测"],
  ["dimetric", "*左右二等角轴测"],
  ["trimetric", "*上下二等角轴测"],
  ["current", "*当前"],
];
const CHECKS = [
  { label: "输入注解", mt: 8 },
  { label: "设计注解", mt: 15, sub: true },
  { label: "DimXpert 注解", mt: 16, sub: true, ls: -0.6 },
  { label: "包括隐藏特征的项目", mt: 10, sub: true },
  { label: "3D View Annotations", mt: 10, sub: true, ls: -0.85 },
  { label: "自动开始投影视图", mt: 25, on: true },
];
const ZONES = [
  ["1", 1015, 224], ["2", 1486, 224], ["3", 1923, 224], ["4", 2358, 224], ["5", 2793, 224], ["6", 3179, 224],
  ["A", 869, 442], ["B", 869, 899], ["B", 3325.5, 899], ["C", 3325.5, 1334],
];
const NOTES = [
  [1324, [["零", 835.5], ["件", 877], ["代", 918.5], ["号", 960]]],
  [1438, [["借", 795], ["(", 829], ["通", 851], [")", 883], ["用", 906], ["件", 947], ["登", 989.5], ["记", 1031]]],
  [1550, [["旧", 827.5], ["底", 869], ["图", 910.5], ["总", 951], ["号", 994]]],
];

const Sheet = () => (
  <SheetSvg viewBox="290 172 3050 1361">
    <defs>
      <linearGradient id="gPaper" x1="0" y1="0" x2="1" y2="1">
        <stop offset="0" stopColor="#ffffff" /><stop offset="1" stopColor="#d6d6d6" />
      </linearGradient>
      <linearGradient id="gYellow" x1="0" y1="0" x2="0" y2="1">
        <stop offset="0" stopColor="#ffe75a" /><stop offset="1" stopColor="#f2b705" />
      </linearGradient>
      <linearGradient id="gBlue" x1="0" y1="0" x2="1" y2="0">
        <stop offset="0" stopColor="#8fd3f0" /><stop offset="1" stopColor="#1f6f98" />
      </linearGradient>
      <radialGradient id="gBall" cx=".35" cy=".3" r=".8">
        <stop offset="0" stopColor="#fafafa" /><stop offset="1" stopColor="#c4c4ba" />
      </radialGradient>
    </defs>
    <rect x="761" y="189" width="2600" height="1400" fill="#e5e6da" stroke="#000" strokeWidth="2" />
    <g stroke="#000" strokeWidth="2" fill="none">
      <path d="M1270 189 V232 M1706 189 V232 M2576 189 V232 M3012 189 V232" />
      <path d="M761 668 H978 M3303 668 H3340" />
      <path d="M761 1284 H978 M761 1328 H978 M761 1398 H978 M761 1441 H978 M761 1509 H978" />
    </g>
    <g stroke="#000" strokeWidth="3" fill="none">
      <path d="M978.5 1540 V232.5 H3303.5 V1540" />
      <path d="M978.5 354.5 H1501.5 V232.5" />
      <path d="M2141.5 189 V276" />
      <path d="M761 1103.5 H1022 M3260 1103.5 H3340" />
      <path d="M1736.5 1540 V1486.5 H3303 M1823.5 1486 V1540 M1910.5 1486 V1540 M2049.5 1486 V1540 M2188.5 1486 V1540 M2293.5 1486 V1540 M2432.5 1486 V1540 M2856.5 1486 V1540" />
    </g>
    <g fill="#222" fontFamily="Inter, Roboto, sans-serif" fontWeight="250" fontSize="32">
      {ZONES.map(([s, x, y]) => (
        <text key={s + x} transform={`translate(${x} ${y}) scale(.56 1)`} textAnchor="middle">{s}</text>
      ))}
    </g>
    <g fill="#1a1a1a" fontFamily="Noto Sans CJK SC, sans-serif" fontWeight="300" fontSize="35">
      {NOTES.map(([y, chars]) =>
        chars.map(([s, x]) => (
          <text key={s + x} transform={`translate(${x} ${y}) skewY(-4) scale(.64 1)`} textAnchor="middle">{s}</text>
        ))
      )}
    </g>
  </SheetSvg>
);

export default function App() {
  return (
    <Window>
      <GlobalStyle />
      <TitleBar>
        <Brand>
          <Glyph width="216" height="52" viewBox="0 1 216 52">
            <g fill="none" stroke="#da291c" strokeLinecap="round">
              <path d="M20.5 10 C26 7.8 30.5 9 29 12.5 C28 15.5 24 18 19.5 20" strokeWidth="2.4" />
              <path d="M14 23.5 C21 21 24.5 23.5 22.5 28 C20.5 32.5 14.5 35.5 9.5 36.5 L16.5 25.5" strokeWidth="2.4" />
              <path d="M37.5 20.5 C32 18.5 28 20.5 28.5 23.5 C29.5 27 36 28 35 31.5 C34 34.5 29 34.5 24 34" strokeWidth="2.8" />
            </g>
            <g fill="#da291c" fontFamily="Open Sans, Noto Sans, sans-serif" fontStyle="italic" fontSize="19.5">
              <text x="46" y="35" fontWeight="700" textLength="58" lengthAdjust="spacingAndGlyphs">SOLID</text>
              <text x="105" y="35" fontWeight="400" textLength="64" lengthAdjust="spacingAndGlyphs">WORKS</text>
            </g>
            <path d="M195 17 L207 27 L195 37Z" fill="#8c8c8c" />
          </Glyph>
        </Brand>
        <QuickBar>
          <Tool $ml={28}><Icon name="home" /></Tool>
          {QUICK.map(([n, off], i) => (
            <React.Fragment key={n}>
              <Tool $ml={i ? 14 : 17} $off={off}><Icon name={n} /></Tool>
              <CaretSlot><Caret c={off ? "#999" : "#444"} /></CaretSlot>
            </React.Fragment>
          ))}
          <SelectTool>
            <SelectMain><Icon name="cursor" /></SelectMain>
            <SelectDrop><Caret /></SelectDrop>
          </SelectTool>
          <Tool $ml={9}><Icon name="light" /></Tool>
          <Tool $ml={19}><Icon name="options" /></Tool>
          <Tool $ml={17}><Icon name="gear" /></Tool>
          <CaretSlot><Caret /></CaretSlot>
        </QuickBar>
        <DocTitle>抽屉 - 图纸1 *</DocTitle>
        <WindowTools>
          <SearchBox>
            <Glyph width="20" height="20" viewBox="0 0 20 20">
              <rect width="20" height="20" rx="2" fill="#2a2a2a" />
              <path d="M4 5 L9.5 10 L4 15 M11 16 H17" stroke="#fff" strokeWidth="1.5" fill="none" />
            </Glyph>
            <SearchText>搜索命令</SearchText>
            <SearchLens>
              <Glyph width="20" height="20" viewBox="0 0 20 20" fill="none" stroke="#888">
                <circle cx="8.5" cy="8" r="7.5" strokeWidth="1.5" />
                <path d="M13.5 13.5 L19.5 19.5" strokeWidth="2" />
              </Glyph>
            </SearchLens>
            <Caret c="#777" />
          </SearchBox>
          <SysButton $ml={20}>
            <Glyph width="24" height="28" viewBox="0 0 24 28" fill="none" stroke="#333" strokeWidth="1.3">
              <circle cx="12" cy="14" r="11.5" />
              <circle cx="12" cy="11.5" r="5" />
              <path d="M4.5 22.5 C6 17.5 18 17.5 19.5 22.5" />
            </Glyph>
          </SysButton>
          <SysButton>
            <Glyph width="24" height="28" viewBox="0 0 24 28">
              <circle cx="12" cy="14" r="11.5" fill="none" stroke="#222" strokeWidth="1.4" />
              <text x="12" y="20.5" textAnchor="middle" fontSize="18" fontWeight="700" fill="#333" fontFamily="Noto Sans, sans-serif">?</text>
            </Glyph>
          </SysButton>
          <SysButton><Glyph width="24" height="28" viewBox="0 0 24 28"><rect x="4" y="21" width="16" height="3" fill="#444" /></Glyph></SysButton>
          <SysButton>
            <Glyph width="24" height="28" viewBox="0 0 24 28" fill="none" stroke="#444" strokeWidth="1.3">
              <path d="M.6 12 H15.5 V23.5 H.6Z M8 11.5 V5 H22.8 V16.5 H16" />
              <path d="M8 5.3 H22.8 M.6 12 H15.5" strokeWidth="2" />
            </Glyph>
          </SysButton>
          <SysButton><Glyph width="24" height="28" viewBox="0 0 24 28"><path d="M4 6 L20 22 M20 6 L4 22" stroke="#333" strokeWidth="2" /></Glyph></SysButton>
        </WindowTools>
      </TitleBar>

      <Ribbon>
        {RIBBON.map((group, gi) => (
          <React.Fragment key={gi}>
            {gi > 0 && <RibbonSep />}
            {group.map(([icon, label, off]) => (
              <RibbonItem key={icon} $off={off}>
                <Icon name={icon} />
                <RibbonLabel>{label}</RibbonLabel>
              </RibbonItem>
            ))}
          </React.Fragment>
        ))}
        <RibbonFold>
          <Glyph width="18" height="14" viewBox="0 0 18 14"><path d="M1.5 12 L9 4 L16.5 12" fill="none" stroke="#444" strokeWidth="3.2" /></Glyph>
        </RibbonFold>
      </Ribbon>

      <Body>
        <LeftPanel>
          <TabStrip>
            {TABS.map(([label, w, ls], i) => (
              <Tab key={label} $w={w} $ls={ls} $active={i === 0}>{label}</Tab>
            ))}
          </TabStrip>
          <TreePane>
            <Grip><GripDot /></Grip>
            <PaneTabs>
              <PaneTab $on><Icon name="drawing" /></PaneTab>
              <PaneTab><Icon name="list" /></PaneTab>
              <PaneMore>
                <Glyph width="13" height="20" viewBox="0 0 13 20"><path d="M2 2 L10 10 L2 18" fill="none" stroke="#444" strokeWidth="3.5" /></Glyph>
              </PaneMore>
            </PaneTabs>
            <FilterBox><Icon name="funnel" /></FilterBox>
            <TreeRow $pad={5}><TreeIcon><Icon name="drawing" /></TreeIcon>抽屉</TreeRow>
            <TreeRow $pad={40}><TreeIcon><Icon name="noteFolder" /></TreeIcon>注解</TreeRow>
            <TreeRow $pad={12}>
              <TreeToggle $mr={16}><Glyph width="12" height="12" viewBox="0 0 12 12"><path d="M0 3 H11 L5.5 9Z" fill="#555" /></Glyph></TreeToggle>
              <TreeIcon><Icon name="sheet" /></TreeIcon>图纸1
            </TreeRow>
            <TreeRow $pad={47}>
              <TreeToggle $mr={16}><Glyph width="12" height="12" viewBox="0 0 12 12"><path d="M3 0 V11 L9 5.5Z" fill="#666" /></Glyph></TreeToggle>
              <TreeIcon><Icon name="sheetFormat" /></TreeIcon>图纸格式1
            </TreeRow>
          </TreePane>
        </LeftPanel>

        <Viewport>
          <Sheet />
          <Hud>
            {["zoomFit", "zoomSheet", "zoomArea", "prevView", "rotate", "view3d", "cube"].map((n) => (
              <Icon key={n} name={n} />
            ))}
            <HudCaret $mr={-1}><Caret c="#666" /></HudCaret>
            <Icon name="eye" />
            <HudCaret $mr={0}><Caret c="#666" /></HudCaret>
            <Icon name="sphere" />
          </Hud>
          <SplitHandle><GripDot /></SplitHandle>
          <SheetTip>图纸1</SheetTip>
          <TaskTabs>
            {["wheel", "home", "library", "folder", "drawing", "beach", "list"].map((n) => (
              <TaskTab key={n} $on={n === "drawing"}><Icon name={n} w={n === "wheel" ? 28 : 27} /></TaskTab>
            ))}
          </TaskTabs>
        </Viewport>

        <Palette>
          <PaletteHead>
            <Glyph width="18" height="16" viewBox="0 0 18 16"><path d="M8 1.5 L2 8 L8 14.5 M15.5 1.5 L9.5 8 L15.5 14.5" fill="none" stroke="#222" strokeWidth="2.6" /></Glyph>
            <PaletteTitle>视图调色板</PaletteTitle>
            <Icon name="gearHead" />
            <PinSlot>
              <Glyph width="26" height="20" viewBox="0 0 26 20">
                <path d="M0 10 H9 M9 2 V18" stroke="#1a1a1a" strokeWidth="2.2" />
                <path d="M9 2 Q13 6 17 6 L25 1 V19 L17 14 Q13 14 9 18Z" fill="#1a1a1a" />
              </Glyph>
            </PinSlot>
          </PaletteHead>
          <SourceRow>
            <Combo>
              <Icon name="part" />
              <ComboText>抽屉</ComboText>
              <Glyph width="12" height="8" viewBox="0 0 12 8"><path d="M1 1 L6 6.5 L11 1" fill="none" stroke="#555" strokeWidth="1.2" /></Glyph>
            </Combo>
            <SquareButton>...</SquareButton>
            <SquareButton>
              <Glyph width="12" height="16" viewBox="0 0 12 16" fill="none" stroke="#119c1d" strokeWidth="2.4">
                <path d="M1.5 6.5 C2 1.5 7 .5 9.5 4 M10.5 9 C10 14.5 5 15.5 2.5 12" />
                <path d="M11 1 V6.5 H6Z M1 15 V9.5 H6Z" fill="#119c1d" stroke="none" />
              </Glyph>
            </SquareButton>
            <SquareButton>
              <Glyph width="13" height="13" viewBox="0 0 13 13"><path d="M1 1 L12 12 M12 1 L1 12" stroke="#d41f1f" strokeWidth="2.4" /></Glyph>
            </SquareButton>
          </SourceRow>
          <Options>
            <Legend>选项</Legend>
            {CHECKS.map(({ label, mt, sub, on, ls }) => (
              <CheckRow key={label} $mt={mt} $sub={sub} $ls={ls}>
                <Box $sub={sub} $on={on}>
                  {on ? <Glyph width="18" height="18" viewBox="0 0 18 18"><path d="M4.5 9.5 L7.5 12.5 L13.5 6" fill="none" stroke="#fff" strokeWidth="1.2" /></Glyph> : null}
                </Box>
                {label}
              </CheckRow>
            ))}
          </Options>
          <Splitter $mt={10} />
          <Hint>将视图拖到工程图图纸。</Hint>
          <Splitter $mt={5}>
            <Glyph width="38" height="4" viewBox="0 0 38 4"><path d="M0 4 L4 0 L8 4Z M15 4 L19 0 L23 4Z M30 4 L34 0 L38 4Z" fill="#000" /></Glyph>
          </Splitter>
          <Views>
            {VIEWS.map(([thumb, label, marked]) => (
              <ViewItem key={thumb}>
                <Thumb name={thumb} />
                <ViewLabel>{label}</ViewLabel>
                {marked && <Highlight />}
              </ViewItem>
            ))}
          </Views>
        </Palette>
      </Body>
    </Window>
  );
}
